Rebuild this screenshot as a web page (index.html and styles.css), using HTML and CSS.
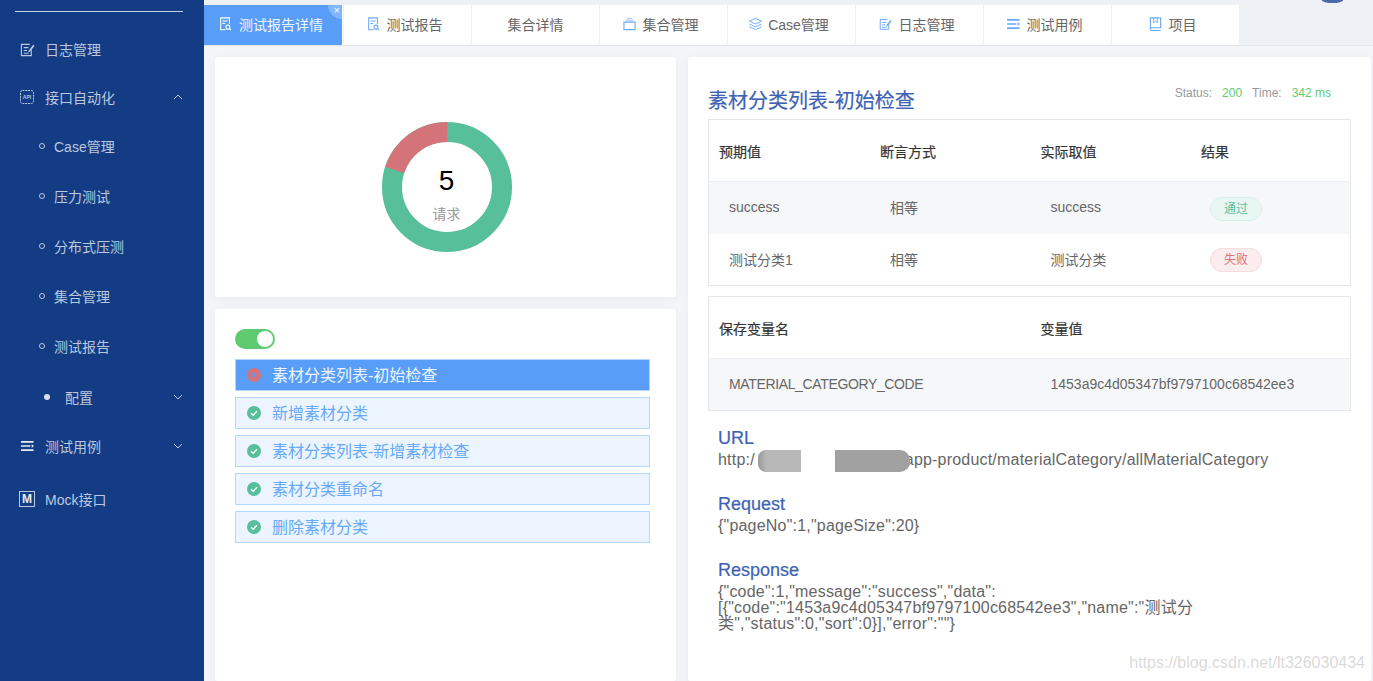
FILE: index.html
```html
<!DOCTYPE html>
<html lang="en">
<head>
    <meta charset="UTF-8">
    <title>测试报告详情</title>
    <link rel="stylesheet" href="styles.css">
</head>
<body>
    <svg class="sprite" width="0" height="0">
        <symbol id="i-report" viewBox="0 0 14 16">
            <path d="M7 14.500H1.500V1h10v7M3.500 4.500h6M3.500 7.500h3" fill="none" stroke="currentColor" stroke-width="1.200"/>
            <circle cx="9.800" cy="11.600" r="2.300" fill="none" stroke="currentColor" stroke-width="1.200"/>
            <path d="M11.500 13.300l1.800 1.800" stroke="currentColor" stroke-width="1.200"/>
        </symbol>
        <symbol id="i-edit" viewBox="0 0 16 16">
            <path d="M12 8v6.500H1.500V2.500h9M4 6h5M4 9h3.500M4 12h5" fill="none" stroke="currentColor" stroke-width="1.200"/>
            <path d="M9 9.500l5-6.500 1.500 1.200-5 6.300-2 .6z" fill="currentColor"/>
        </symbol>
        <symbol id="i-box" viewBox="0 0 14 14">
            <path d="M1 5h12v8H1z" fill="none" stroke="currentColor" stroke-width="1.200"/>
            <path d="M2.500 3h9M4 1h6" stroke="currentColor" stroke-width="1" opacity=".7"/>
        </symbol>
        <symbol id="i-layers" viewBox="0 0 16 14">
            <path d="M8 1l6.500 3L8 7 1.500 4zM1.500 7L8 10l6.500-3M1.500 10L8 13l6.500-3" fill="none" stroke="currentColor" stroke-width="1"/>
        </symbol>
        <symbol id="i-list" viewBox="0 0 14 12">
            <path d="M0 1.500h13.500M0 6h10M0 10.500h13.500" stroke="currentColor" stroke-width="1.800"/>
            <path d="M11.500 4.200L14 6l-2.500 1.800z" fill="currentColor"/>
        </symbol>
        <symbol id="i-book" viewBox="0 0 13 15">
            <path d="M1 12.500V1h11v10.500H2.500A1.500 1.500 0 0 0 2.500 14.500H12" fill="none" stroke="currentColor" stroke-width="1.200"/>
            <path d="M4.500 1v5l2-1.500 2 1.500V1" fill="none" stroke="currentColor" stroke-width="1"/>
        </symbol>
        <symbol id="i-chev-up" viewBox="0 0 10 6"><path d="M1 5l4-4 4 4" fill="none" stroke="currentColor"/></symbol>
        <symbol id="i-chev-down" viewBox="0 0 10 6"><path d="M1 1l4 4 4-4" fill="none" stroke="currentColor"/></symbol>
        <symbol id="i-ok" viewBox="0 0 14 14">
            <circle cx="7" cy="7" r="7" fill="#57c09a"/>
            <path d="M4 7.200l2.200 2L10 5.200" fill="none" stroke="#fff" stroke-width="1.400"/>
        </symbol>
        <symbol id="i-fail" viewBox="0 0 14 14">
            <circle cx="7" cy="7" r="7" fill="#d5737b"/>
            <path d="M5 5l4 4M9 5l-4 4" fill="none" stroke="#589ef9" stroke-width="1.200"/>
        </symbol>
    </svg>

    <div class="sidebar">
        <div class="sidebar-rule"></div>
        <div class="nav-item">
            <svg class="nav-icon"><use href="#i-edit"/></svg>日志管理
        </div>
        <div class="nav-item">
            <svg class="nav-icon nav-icon-api" viewBox="0 0 16 16">
                <rect x="1.500" y="1.500" width="13" height="13" rx="2" fill="none" stroke="currentColor" stroke-dasharray="2 .8"/>
                <text x="8" y="10" class="api-text">API</text>
            </svg>接口自动化
            <svg class="chev"><use href="#i-chev-up"/></svg>
        </div>
        <div class="sub-item"><i class="dot"></i>Case管理</div>
        <div class="sub-item"><i class="dot"></i>压力测试</div>
        <div class="sub-item"><i class="dot"></i>分布式压测</div>
        <div class="sub-item"><i class="dot"></i>集合管理</div>
        <div class="sub-item"><i class="dot"></i>测试报告</div>
        <div class="sub-item sub-group">
            <i class="dot-big"></i>配置
            <svg class="chev"><use href="#i-chev-down"/></svg>
        </div>
        <div class="nav-item">
            <svg class="nav-icon nav-icon-list"><use href="#i-list"/></svg>测试用例
            <svg class="chev"><use href="#i-chev-down"/></svg>
        </div>
        <div class="nav-item nav-mock">
            <span class="mock-icon">M</span>Mock接口
        </div>
    </div>

    <div class="main-content">
        <div class="avatar"></div>
        <div class="tabs">
            <div class="tab active">
                <svg class="tab-icon"><use href="#i-report"/></svg>测试报告详情
                <span class="tab-close">×</span>
            </div>
            <div class="tab"><svg class="tab-icon"><use href="#i-report"/></svg>测试报告</div>
            <div class="tab">集合详情</div>
            <div class="tab"><svg class="tab-icon"><use href="#i-box"/></svg>集合管理</div>
            <div class="tab"><svg class="tab-icon tab-icon-wide"><use href="#i-layers"/></svg>Case管理</div>
            <div class="tab"><svg class="tab-icon"><use href="#i-edit"/></svg>日志管理</div>
            <div class="tab"><svg class="tab-icon"><use href="#i-list"/></svg>测试用例</div>
            <div class="tab"><svg class="tab-icon"><use href="#i-book"/></svg>项目</div>
        </div>

        <div class="report">
            <div class="report-left">
                <div class="card chart-card">
                    <div class="donut">
                        <svg width="130" height="130" viewBox="0 0 130 130">
                            <circle cx="65" cy="65" r="55" fill="none" stroke="#57c09a" stroke-width="20"/>
                            <circle class="donut-fail" cx="65" cy="65" r="55" fill="none" stroke="#d5737b" stroke-width="20" stroke-dasharray="69.100 276.500"/>
                        </svg>
                        <div class="donut-label">
                            <div class="donut-num">5</div>
                            <div class="donut-text">请求</div>
                        </div>
                    </div>
                </div>
                <div class="card steps-card">
                    <div class="switch"><i></i></div>
                    <div class="step active"><svg class="step-icon"><use href="#i-fail"/></svg>素材分类列表-初始检查</div>
                    <div class="step"><svg class="step-icon"><use href="#i-ok"/></svg>新增素材分类</div>
                    <div class="step"><svg class="step-icon"><use href="#i-ok"/></svg>素材分类列表-新增素材检查</div>
                    <div class="step"><svg class="step-icon"><use href="#i-ok"/></svg>素材分类重命名</div>
                    <div class="step"><svg class="step-icon"><use href="#i-ok"/></svg>删除素材分类</div>
                </div>
            </div>

            <div class="card detail-card">
                <div class="detail-head">
                    <h2>素材分类列表-初始检查</h2>
                    <div class="status">
                        Status:<b>200</b>Time:<b>342 ms</b>
                    </div>
                </div>

                <table class="data-table">
                    <tr><th>预期值</th><th>断言方式</th><th>实际取值</th><th>结果</th></tr>
                    <tr class="striped">
                        <td>success</td><td>相等</td><td>success</td>
                        <td><span class="tag tag-ok">通过</span></td>
                    </tr>
                    <tr>
                        <td>测试分类1</td><td>相等</td><td>测试分类</td>
                        <td><span class="tag tag-fail">失败</span></td>
                    </tr>
                </table>

                <table class="data-table">
                    <tr><th>保存变量名</th><th>变量值</th></tr>
                    <tr class="striped">
                        <td class="var-name">MATERIAL_CATEGORY_CODE</td><td>1453a9c4d05347bf9797100c68542ee3</td>
                    </tr>
                </table>

                <div class="block">
                    <h3>URL</h3>
                    <div class="url-line">
                        http:/<span class="url-gap"></span>app-product/materialCategory/allMaterialCategory
                        <i class="blur blur-a"></i>
                        <i class="blur blur-b"></i>
                    </div>
                </div>
                <div class="block">
                    <h3>Request</h3>
                    <p>{"pageNo":1,"pageSize":20}</p>
                </div>
                <div class="block">
                    <h3>Response</h3>
                    <p class="response">{"code":1,"message":"success","data":[{"code":"1453a9c4d05347bf9797100c68542ee3","name":"测试分类","status":0,"sort":0}],"error":""}</p>
                </div>
            </div>
        </div>
    </div>
    <div class="watermark">https://blog.csdn.net/lt326030434</div>
</body>
</html>
```
FILE: styles.css
```css
:root {
    --sidebar: #133c85;
    --sidebar-text: #bcc8dd;
    --primary: #589ef9;
    --title: #3d62b4;
    --green: #57c09a;
    --text: #666666;
    --line: #e3e6ea;
}

html, body {
    height: 100%;
}

body {
    font-family: "Liberation Sans", "Noto Sans CJK SC", sans-serif;
    margin: 0;
    padding: 0;
    display: flex;
    overflow: hidden;
    background-color: #f3f5f8;
    color: var(--text);
    font-size: 14px;
}

.sprite {
    position: absolute;
}

.sidebar {
    width: 204px;
    flex-shrink: 0;
    background-color: var(--sidebar);
    color: var(--sidebar-text);
    padding-top: 11px;
    box-sizing: border-box;
}

.sidebar-rule {
    height: 1px;
    margin: 0 21px 13px 15px;
    background-color: #c5d0e4;
}

.nav-item {
    height: 48px;
    display: flex;
    align-items: center;
    padding-left: 20px;
    position: relative;
}

.nav-icon {
    width: 15px;
    height: 15px;
    margin-right: 10px;
}

.nav-icon-api {
    width: 16px;
    height: 16px;
    margin-left: -1px;
}

.api-text {
    font-size: 5px;
    font-weight: bold;
    text-anchor: middle;
    fill: currentColor;
}

.nav-icon-list {
    width: 13px;
    height: 12px;
    margin-left: 1px;
    margin-right: 11px;
    color: #e8edf5;
}

.nav-mock {
    margin-top: 5px;
}

.mock-icon {
    width: 14px;
    height: 14px;
    border: 1px solid var(--sidebar-text);
    margin-left: -1px;
    margin-right: 10px;
    font-size: 12px;
    line-height: 14px;
    font-weight: bold;
    text-align: center;
    color: #e8edf5;
}

.chev {
    position: absolute;
    right: 21px;
    top: 50%;
    width: 10px;
    height: 6px;
    margin-top: -3px;
}

.sub-item {
    height: 50px;
    display: flex;
    align-items: center;
    padding-left: 39px;
    position: relative;
}

.sub-group {
    margin-top: 1px;
    padding-left: 44px;
}

.dot {
    width: 6px;
    height: 6px;
    border: 1px solid var(--sidebar-text);
    border-radius: 50%;
    margin-right: 9px;
    box-sizing: border-box;
}

.dot-big {
    width: 6px;
    height: 6px;
    background-color: #d5dcea;
    border-radius: 50%;
    margin-right: 15px;
}

.main-content {
    flex: 1;
    min-width: 0;
    position: relative;
    display: flex;
    flex-direction: column;
}

.avatar {
    position: absolute;
    top: 0;
    right: 30px;
    width: 21px;
    height: 3px;
    border-radius: 0 0 11px 11px / 0 0 3px 3px;
    background-color: #4a6aa5;
}

.tabs {
    display: flex;
    flex-shrink: 0;
    padding-top: 5px;
    background-color: #edf1f6;
    border-bottom: 1px solid var(--line);
    height: 40px;
}

.tab {
    width: 128px;
    display: flex;
    align-items: center;
    justify-content: center;
    padding-bottom: 2px;
    background-color: white;
    border-right: 1px solid #eef0f3;
    box-sizing: border-box;
    color: var(--text);
    position: relative;
}

.tab.active {
    width: 139px;
    margin-right: 1px;
    border-right: 1px solid white;
    background-color: var(--primary);
    color: #eef5ff;
}

.tab-icon {
    width: 13px;
    height: 14px;
    margin-left: -6px;
    margin-right: 7px;
    color: #69a9fb;
}

.tab.active .tab-icon {
    margin-left: -4px;
    color: white;
}

.tab-icon-wide {
    width: 15px;
    margin-right: 5px;
}

.tab-close {
    position: absolute;
    top: 0;
    right: 0;
    width: 14px;
    height: 14px;
    border-bottom-left-radius: 14px;
    background-color: rgba(255,255,255,0.25);
    color: white;
    font-size: 11px;
    line-height: 11px;
    text-align: right;
    padding-right: 2px;
    box-sizing: border-box;
}

.report {
    flex: 1;
    min-height: 0;
    display: grid;
    grid-template-columns: 461px 683px;
    gap: 12px;
    padding: 11px 0 0 11px;
}

.report-left {
    display: flex;
    flex-direction: column;
    gap: 12px;
    min-height: 0;
}

.card {
    background: white;
    border-radius: 3px;
    box-shadow: 0 2px 10px rgba(0,0,0,0.05);
}

.chart-card {
    height: 240px;
    flex-shrink: 0;
    display: flex;
    justify-content: center;
    align-items: center;
}

.donut {
    width: 130px;
    height: 130px;
    position: relative;
    margin-top: 20px;
    margin-left: 2px;
}

.donut svg {
    display: block;
}

.donut-fail {
    transform: rotate(-162deg);
    transform-origin: 65px 65px;
}

.donut-label {
    position: absolute;
    top: 42px;
    left: 0;
    right: 0;
    text-align: center;
}

.donut-num {
    font-size: 28px;
    line-height: 34px;
    color: #000;
}

.donut-text {
    margin-top: 6px;
    line-height: 20px;
    color: #999;
}

.steps-card {
    flex: 1;
    min-height: 0;
    padding: 20px 26px 0 20px;
}

.switch {
    width: 40px;
    height: 20px;
    border-radius: 10px;
    background-color: #5fcb71;
    margin-bottom: 10px;
    position: relative;
}

.switch i {
    position: absolute;
    top: 2px;
    right: 2px;
    width: 16px;
    height: 16px;
    border-radius: 50%;
    background-color: white;
}

.step {
    height: 32px;
    margin-bottom: 6px;
    display: flex;
    align-items: center;
    padding-left: 11px;
    padding-bottom: 2px;
    border: 1px solid #b3d8ff;
    background-color: #ecf5ff;
    box-sizing: border-box;
    color: #66a9f9;
    font-size: 16px;
}

.step.active {
    background-color: var(--primary);
    color: #eef5ff;
}

.step-icon {
    width: 14px;
    height: 14px;
    margin-top: 2px;
    margin-right: 11px;
}

.detail-card {
    min-height: 0;
    padding: 0 20px;
}

.detail-head {
    height: 62px;
    position: relative;
    padding-top: 32px;
    box-sizing: border-box;
}

.detail-head h2 {
    margin: 0;
    font-size: 20px;
    line-height: 24px;
    font-weight: normal;
    color: var(--title);
    -webkit-text-stroke: 0.2px var(--title);
}

.status {
    position: absolute;
    top: 28px;
    right: 20px;
    font-size: 12px;
    line-height: 16px;
    color: #999;
}

.status b {
    font-weight: normal;
    color: #5fcb71;
    margin: 0 10px;
}

.status b:last-child {
    margin-right: 0;
}

.data-table {
    width: 100%;
    table-layout: fixed;
    border-collapse: collapse;
    border: 1px solid var(--line);
    margin-bottom: 10px;
}

.data-table th {
    height: 61px;
    padding: 0 0 0 10px;
    text-align: left;
    font-weight: normal;
    color: #333;
    border-bottom: 1px solid #ebeef5;
    -webkit-text-stroke: 0.2px #333;
}

.data-table th + th {
    padding-left: 11px;
}

.data-table td {
    height: 50px;
    padding: 0 0 2px 20px;
}

.data-table td + td {
    padding-left: 21px;
}

.data-table tr:last-child td {
    height: 49px;
}

.data-table .striped td {
    background-color: #f6f7f9;
}

.var-name {
    letter-spacing: -0.36px;
}

.tag {
    display: inline-block;
    width: 52px;
    height: 24px;
    margin-top: 3px;
    margin-left: -1px;
    line-height: 22px;
    border: 1px solid;
    border-radius: 12px;
    box-sizing: border-box;
    text-align: center;
    font-size: 12px;
}

.tag-ok {
    background-color: #e9f7f3;
    border-color: #d5f0e7;
    color: var(--green);
}

.tag-fail {
    background-color: #fbeced;
    border-color: #f7dadd;
    color: #e0707c;
}

.block {
    padding-left: 10px;
    height: 66px;
}

.data-table + .block {
    margin-top: 16px;
}

.block h3 {
    margin: 0 0 1px;
    font-size: 18px;
    line-height: 22px;
    font-weight: normal;
    color: var(--title);
    -webkit-text-stroke: 0.2px var(--title);
}

.block p,
.url-line {
    margin: 0;
    font-size: 16px;
    line-height: 20px;
    letter-spacing: 0.2px;
}

.url-line {
    position: relative;
}

.url-gap {
    display: inline-block;
    width: 150px;
}

.blur {
    position: absolute;
    top: 0;
    height: 22px;
}

.blur-a {
    left: 40px;
    width: 43px;
    background: linear-gradient(to right, #999999, #b8b8b8 20%);
    border-radius: 8px 0 0 8px;
}

.blur-b {
    left: 117px;
    width: 75px;
    background-color: #a1a1a1;
    border-radius: 0 10px 10px 0;
}

.block .response {
    width: 482px;
    line-height: 16px;
    margin-top: 3px;
    overflow-wrap: anywhere;
}

.watermark {
    position: absolute;
    right: 8px;
    bottom: 9px;
    font-size: 16px;
    color: rgba(170,170,170,0.45);
}
```
